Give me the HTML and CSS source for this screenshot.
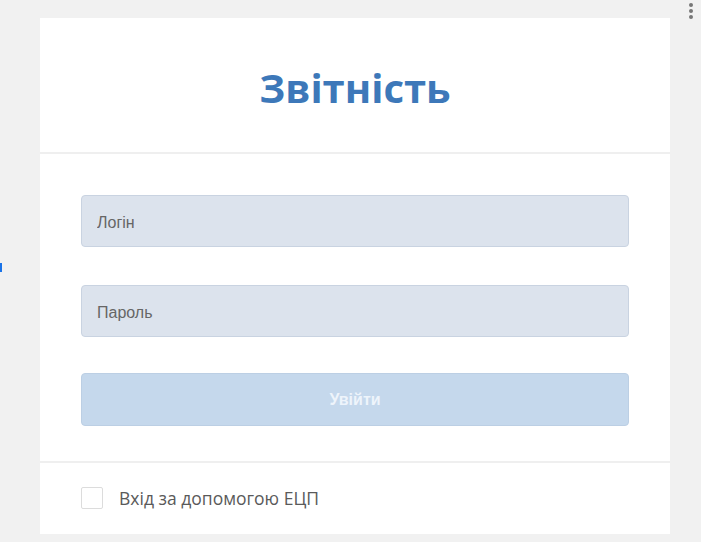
FILE: index.html
```html
<!DOCTYPE html>
<html lang="uk">
<head>
    <meta charset="UTF-8">
    <title>Звітність</title>
    <link rel="stylesheet" href="styles.css">
</head>
<body>

    <div class="menu-dots">
        <span></span>
        <span></span>
        <span></span>
    </div>
    <span class="side-mark"></span>

    <div class="login-card">
        <div class="login-header">
            <h1>Звітність</h1>
        </div>

        <form class="login-form">
            <input type="text" name="login" placeholder="Логін">
            <input type="password" name="password" placeholder="Пароль">
            <button type="submit" class="btn-login">Увійти</button>
        </form>

        <div class="login-footer">
            <label class="ecp">
                <input type="checkbox" name="ecp">
                <span class="box"></span>
                Вхід за допомогою ЕЦП
            </label>
        </div>
    </div>

</body>
</html>
```

FILE: styles.css
```css
body {
    margin: 0;
    background-color: #f1f1f1;
    font-family: "Open Sans", Arial, sans-serif;
    position: relative;
    height: 542px;
    overflow: hidden;
}

.menu-dots {
    position: absolute;
    top: 3px;
    left: 689px;
    display: flex;
    flex-direction: column;
    gap: 2px;
}

.menu-dots span {
    width: 4px;
    height: 4px;
    border-radius: 50%;
    background-color: #777;
}

.side-mark {
    position: absolute;
    left: 0;
    top: 263px;
    width: 2px;
    height: 9px;
    background-color: #1a73e8;
}

.login-card {
    width: 630px;
    margin: 18px 0 0 40px;
    background-color: #fff;
}

.login-header {
    height: 134px;
    display: flex;
    align-items: center;
    justify-content: center;
    border-bottom: 2px solid #efefef;
}

.login-header h1 {
    margin: 0;
    padding-top: 4px;
    font-size: 40px;
    font-weight: 700;
    color: #3d78b9;
}

.login-form {
    display: flex;
    flex-direction: column;
    padding: 41px 41px 35px;
    border-bottom: 2px solid #efefef;
}

.login-form input {
    height: 52px;
    box-sizing: border-box;
    margin: 0 0 38px;
    padding: 3px 15px 0;
    border: 1px solid #c9d3e1;
    border-radius: 4px;
    background-color: #dce3ed;
    font-family: "Liberation Sans", Arial, sans-serif;
    font-size: 16px;
    color: #333;
}

.login-form input[type="password"] {
    margin-bottom: 36px;
}

.login-form input::placeholder {
    color: #666;
}

.btn-login {
    height: 53px;
    border: 1px solid #bccfe4;
    border-radius: 4px;
    background-color: #c5d8ec;
    color: #eef4fb;
    font-family: "Liberation Sans", Arial, sans-serif;
    font-size: 16px;
    font-weight: 700;
}

.login-footer {
    padding: 24px 41px 25px;
}

.ecp {
    display: flex;
    align-items: center;
    gap: 16px;
    font-size: 17.5px;
    color: #5a5a5a;
    height: 22px;
}

.ecp input {
    display: none;
}

.ecp .box {
    width: 20px;
    height: 20px;
    border: 1px solid #dcdcdc;
    border-radius: 2px;
}
```
